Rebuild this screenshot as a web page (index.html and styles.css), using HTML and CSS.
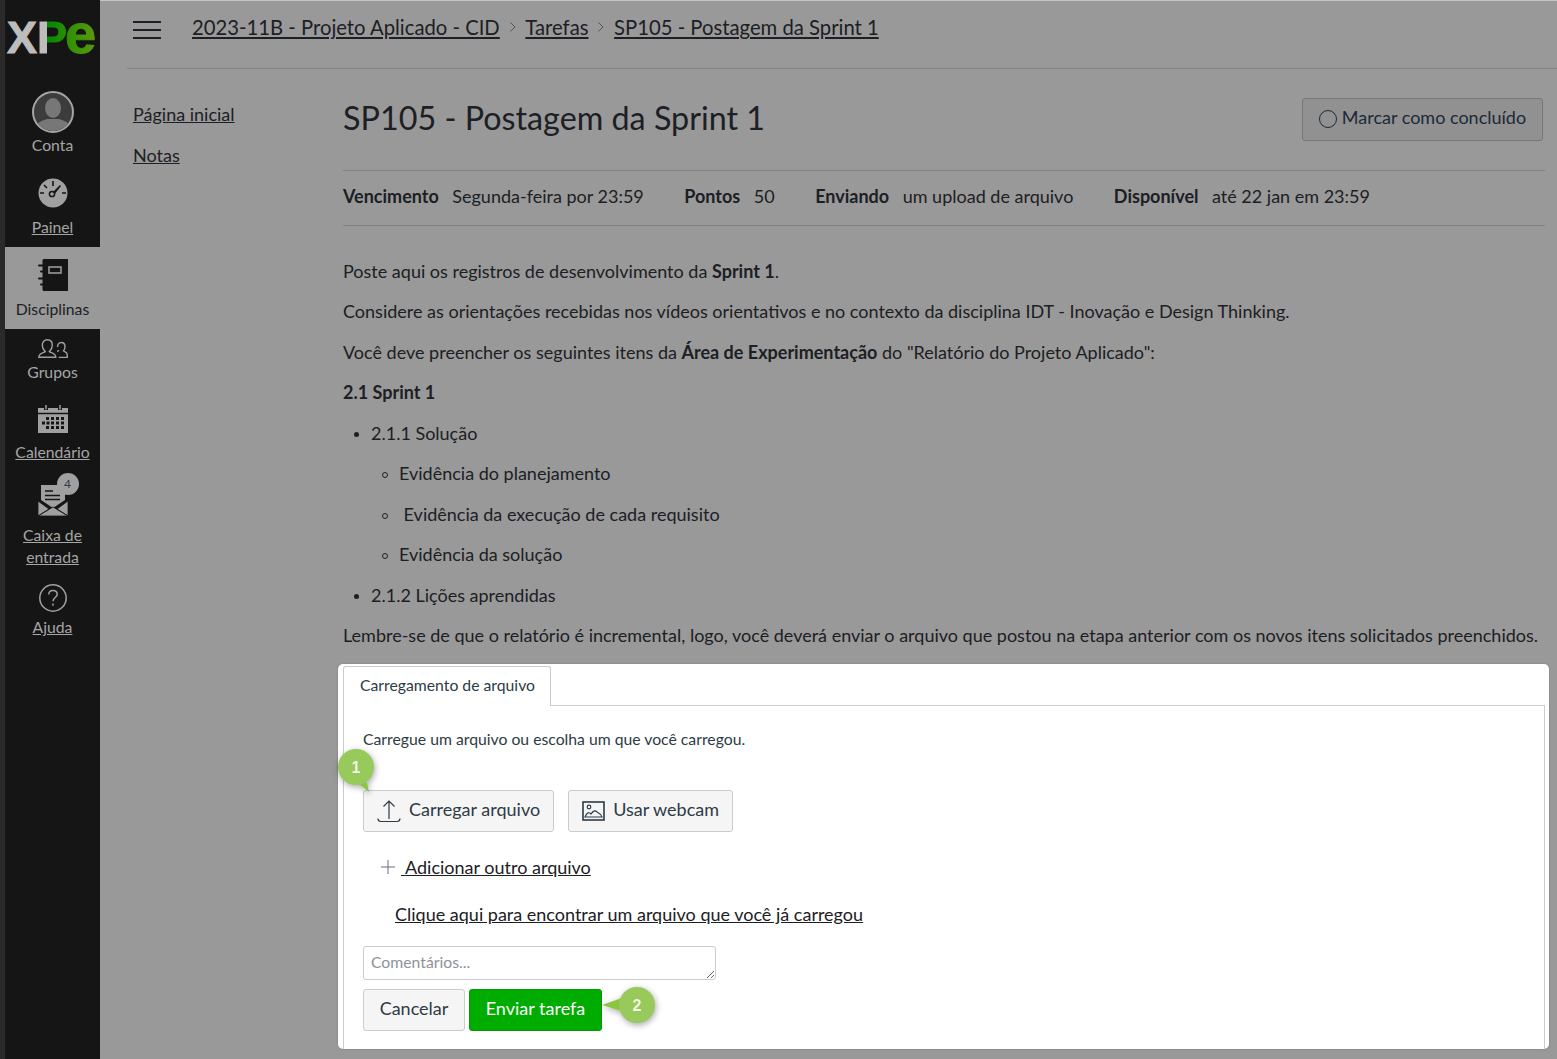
FILE: index.html
```html
<!DOCTYPE html>
<html>
<head>
  <meta charset="utf-8">
  <title>SP105 - Postagem da Sprint 1</title>
  <link rel="stylesheet" href="styles.css">
</head>
<body>
  <div class="app">
    <aside class="sidebar">
      <div class="logo"><span class="logo-x">X</span><span class="logo-p">P</span><span class="logo-e">e</span></div>

      <div class="side-item item-account">
        <svg width="42" height="42" viewBox="0 0 42 42">
          <defs><clipPath id="avatar"><circle cx="21" cy="21" r="19"/></clipPath></defs>
          <circle cx="21" cy="21" r="20" fill="#3c3c3c" stroke="#a5a5a5" stroke-width="2"/>
          <g clip-path="url(#avatar)" fill="#777">
            <ellipse cx="21" cy="17" rx="8" ry="10"/>
            <path d="M2 42c0-10 7-12 13-14h12c6 2 13 4 13 14z"/>
          </g>
        </svg>
        <span class="side-label">Conta</span>
      </div>

      <a class="side-item item-dash" href="#">
        <svg width="30" height="30" viewBox="0 0 30 30">
          <circle cx="15" cy="15" r="14.5" fill="#a0a0a0"/>
          <path d="M15 3v5M6 7l3 3M2 15h4M24 15h4" stroke="#151515" stroke-width="1.6"/>
          <path d="M14 15l8-8 1 1-7 9z" fill="#151515"/>
          <circle cx="14" cy="16" r="2.6" fill="#a0a0a0" stroke="#151515" stroke-width="1.5"/>
        </svg>
        <span class="side-label">Painel</span>
      </a>

      <div class="side-item item-courses active">
        <svg width="30" height="32" viewBox="0 0 30 32">
          <path d="M4.500 1.500C4.500 .7 5.200 0 6 0H30v32H6C5.200 32 4.500 31.300 4.500 30.500z" fill="#151515"/>
          <rect x="11" y="8" width="12" height="6" fill="none" stroke="#999" stroke-width="1.600"/>
          <path d="M1 6.500h5M3 12.500h3M1 19.500h5M3 25.500h3" stroke="#151515" stroke-width="2" stroke-linecap="round"/>
        </svg>
        <span class="side-label">Disciplinas</span>
      </div>

      <div class="side-item item-groups">
        <svg width="30" height="19" viewBox="0 0 30 19" fill="none" stroke="#a0a0a0" stroke-width="1.400">
          <path d="M.8 18.200c0-3.500 4-4 6.500-5.500-2-2-3-3.700-3-6.500 0-3.300 2-5.500 5-5.500s5 2.200 5 5.500c0 2.800-1 4.500-3 6.500 2.500 1.500 6.500 2 6.500 5.500z"/>
          <path d="M19.500 8c0-2.500 1.300-4.500 3.800-4.500s3.700 2 3.700 4.300c0 2-.7 3.200-1.500 4.200 1.500 1 3.700 1.400 3.700 3.400v3h-8.500M19.200 12.500c.6-.3 1.200-.7 1.800-1.300"/>
        </svg>
        <span class="side-label">Grupos</span>
      </div>

      <a class="side-item item-calendar" href="#">
        <svg width="30" height="28" viewBox="0 0 30 28">
          <path d="M0 3h30v25H0z" fill="#a0a0a0"/>
          <path d="M0 8.500h30" stroke="#151515" stroke-width="1.500"/>
          <path d="M8 0v5M22 0v5" stroke="#151515" stroke-width="4"/>
          <path d="M8 0v4.500M22 0v4.500" stroke="#a0a0a0" stroke-width="1.500"/>
          <path d="M8 12h3v3H8zM13 12h3v3h-3zM18 12h3v3h-3zM23 12h3v3h-3zM4 16.500h3v3H4zM8.500 16.500h3v3h-3zM13 16.500h3v3h-3zM18 16.500h3v3h-3zM23 16.500h3v3h-3zM8 21h3v3H8zM13 21h3v3h-3zM18 21h3v3h-3zM23 21h3v3h-3z" fill="#151515"/>
        </svg>
        <span class="side-label">Calendário</span>
      </a>

      <a class="side-item item-inbox" href="#">
        <div class="inbox-icon">
          <svg width="30" height="31" viewBox="0 0 30 31">
            <path d="M3 0h19v5l5 3v7l-12 8L3 15z" fill="#a0a0a0"/>
            <path d="M7 6h8M7 10.500h15M7 14.500h15" stroke="#151515" stroke-width="1.500"/>
            <path d="M0 16l11 8-11 7zM30 16l-11 8 11 7zM0 31l15-9 15 9z" fill="#a0a0a0" stroke="#151515" stroke-width=".8"/>
          </svg>
          <span class="badge">4</span>
        </div>
        <span class="side-label">Caixa de entrada</span>
      </a>

      <a class="side-item item-help" href="#">
        <svg width="28" height="28" viewBox="0 0 28 28" fill="none" stroke="#a0a0a0" stroke-width="1.500">
          <circle cx="14" cy="14" r="13.200"/>
          <path d="M9.800 10.500c0-2.500 1.800-4 4.200-4s4.200 1.500 4.200 3.800c0 3.200-4.200 3.300-4.200 7"/>
          <path d="M14 19.500v2.300"/>
        </svg>
        <span class="side-label">Ajuda</span>
      </a>
    </aside>

    <div class="page">
      <header class="topbar">
        <div class="burger"><span></span><span></span><span></span></div>
        <nav class="crumbs">
          <a href="#">2023-11B - Projeto Aplicado - CID</a>
          <svg width="6" height="10" viewBox="0 0 6 10"><path d="M.5.500L5 5 .5 9.500" fill="none" stroke="#555" stroke-width="1"/></svg>
          <a href="#">Tarefas</a>
          <svg width="6" height="10" viewBox="0 0 6 10"><path d="M.5.500L5 5 .5 9.500" fill="none" stroke="#555" stroke-width="1"/></svg>
          <a href="#">SP105 - Postagem da Sprint 1</a>
        </nav>
      </header>

      <div class="columns">
        <nav class="course-nav">
          <a href="#">Página inicial</a>
          <a href="#">Notas</a>
        </nav>

        <main class="content">
          <div class="title-row">
            <h1>SP105 - Postagem da Sprint 1</h1>
            <button class="mark-btn"><span class="ring"></span>Marcar como concluído</button>
          </div>

          <div class="meta">
            <span><b>Vencimento</b>Segunda-feira por 23:59</span>
            <span><b>Pontos</b>50</span>
            <span><b>Enviando</b>um upload de arquivo</span>
            <span><b>Disponível</b>até 22 jan em 23:59</span>
          </div>

          <div class="description">
            <p>Poste aqui os registros de desenvolvimento da <b>Sprint 1</b>.</p>
            <p>Considere as orientações recebidas nos vídeos orientativos e no contexto da disciplina IDT - Inovação e Design Thinking.</p>
            <p>Você deve preencher os seguintes itens da <b>Área de Experimentação</b> do "Relatório do Projeto Aplicado":</p>
            <p><b>2.1 Sprint 1</b></p>
            <ul>
              <li>2.1.1 Solução
                <ul>
                  <li>Evidência do planejamento</li>
                  <li>&nbsp;Evidência da execução de cada requisito</li>
                  <li>Evidência da solução</li>
                </ul>
              </li>
              <li>2.1.2 Lições aprendidas</li>
            </ul>
            <p>Lembre-se de que o relatório é incremental, logo, você deverá enviar o arquivo que postou na etapa anterior com os novos itens solicitados preenchidos.</p>
          </div>

          <section class="submit-panel">
            <div class="tabs"><div class="tab">Carregamento de arquivo</div></div>
            <div class="tab-body">
              <p class="upload-hint">Carregue um arquivo ou escolha um que você carregou.</p>
              <div class="upload-btns">
                <button class="btn">
                  <svg width="24" height="24" viewBox="0 0 24 24" fill="none" stroke="#2d3b45" stroke-width="1.200">
                    <path d="M12 20V2M6.500 7.500L12 2l5.500 5.500"/>
                    <path d="M1 19.500c0 2 1 3 3 3h16c2 0 3-1 3-3"/>
                  </svg>
                  Carregar arquivo
                </button>
                <button class="btn">
                  <svg width="23" height="20" viewBox="0 0 23 20" fill="none" stroke="#2d3b45" stroke-width="1.200">
                    <rect x="1" y="1" width="21" height="18" stroke-width="1.600"/>
                    <circle cx="7" cy="6" r="1.800"/>
                    <path d="M3 16c2-5 4-5 6-3 2-3 4-4 6-2 2 1 4 2 5 5z"/>
                  </svg>
                  Usar webcam
                </button>
              </div>
              <div class="add-file">
                <svg width="14" height="14" viewBox="0 0 14 14"><path d="M7 0v14M0 7h14" stroke="#6b6f80" stroke-width="1"/></svg>
                <a href="#">&nbsp;Adicionar outro arquivo</a>
              </div>
              <a class="find-file" href="#">Clique aqui para encontrar um arquivo que você já carregou</a>
              <textarea class="comments" placeholder="Comentários..."></textarea>
              <div class="form-actions">
                <button class="btn btn-cancel">Cancelar</button>
                <button class="btn btn-submit">Enviar tarefa</button>
              </div>
            </div>

            <svg class="callout callout-one" width="44" height="52" viewBox="0 0 44 52">
              <path d="M14 30l19 16-2-9z" fill="#8cc63f"/>
              <circle cx="20" cy="21" r="18" fill="#97c95b"/>
              <text x="20" y="27" text-anchor="middle">1</text>
            </svg>
            <svg class="callout callout-two" width="60" height="44" viewBox="0 0 60 44">
              <path d="M1 20l20-7v13z" fill="#8cc63f"/>
              <circle cx="36" cy="20" r="18" fill="#97c95b"/>
              <text x="36" y="26" text-anchor="middle">2</text>
            </svg>
          </section>
        </main>
      </div>
    </div>
  </div>
</body>
</html>
```

FILE: styles.css
```css
html, body {
  margin: 0;
  padding: 0;
  height: 100%;
  overflow: hidden;
}
body {
  font-family: Lato, "Noto Sans", sans-serif;
  font-size: 18px;
  color: #1c2024;
  background-color: #999;
}
a {
  color: inherit;
}
.app {
  display: flex;
  height: 1059px;
  border-top: 1px solid #c4c4c4;
  box-sizing: border-box;
}

/* left global nav */
.sidebar {
  width: 95px;
  flex: none;
  margin-top: -1px;
  background-color: #151515;
  border-left: 5px solid #2a2a2a;
  color: #a6a6a6;
  font-size: 15.75px;
  line-height: 22px;
  text-align: center;
}
.logo {
  height: 82px;
  box-sizing: border-box;
  padding-top: 4px;
  padding-left: 2px;
  text-align: left;
  font-family: "Liberation Sans", sans-serif;
  font-weight: bold;
  font-size: 45px;
  line-height: 60px;
  white-space: nowrap;
  overflow: hidden;
}
.logo-x {
  color: #bdbdbd;
  -webkit-text-stroke: 1px #bdbdbd;
}
.logo-p {
  background: linear-gradient(90deg, #bdbdbd 0, #bdbdbd 10px, #008a00 10px, #2a8f04 100%);
  -webkit-background-clip: text;
  background-clip: text;
  color: transparent;
  -webkit-text-stroke: 1px transparent;
}
.logo-e {
  font-size: 56px;
  margin-left: -2px;
  background: linear-gradient(90deg, #2a8f04 0, #5c9a0c 100%);
  -webkit-background-clip: text;
  background-clip: text;
  color: transparent;
  -webkit-text-stroke: 1px transparent;
}
.side-item {
  display: flex;
  flex-direction: column;
  align-items: center;
  box-sizing: border-box;
}
.side-item svg {
  display: block;
}
.item-account {
  height: 83px;
  padding-top: 9px;
  gap: 1px;
}
.item-dash {
  height: 82px;
  padding-top: 13px;
  gap: 8px;
}
.item-courses {
  height: 82px;
  padding-top: 12px;
  gap: 7px;
}
.item-courses.active {
  background-color: #999;
  color: #1c2024;
}
.item-groups {
  padding-top: 10px;
  gap: 3px;
}
.item-calendar {
  padding-top: 22px;
  gap: 8px;
}
.item-inbox {
  padding: 22px 10px 0;
  gap: 8px;
}
.item-help {
  padding-top: 16px;
  gap: 4px;
}
.inbox-icon {
  position: relative;
}
.badge {
  position: absolute;
  top: -12px;
  right: -11px;
  width: 22px;
  height: 22px;
  border-radius: 50%;
  background-color: #a0a0a0;
  color: #2d3b45;
  font-size: 12px;
  line-height: 22px;
}

/* page */
.page {
  flex: 1;
  min-width: 0;
  padding-left: 27px;
}
.topbar {
  display: flex;
  height: 68px;
  padding-left: 6px;
  padding-top: 13px;
  box-sizing: border-box;
  border-bottom: 1px solid #7e8386;
}
.burger {
  width: 28px;
  height: 18px;
  margin-top: 7px;
  display: flex;
  flex-direction: column;
  gap: 6px;
  margin-right: 31px;
}
.burger span {
  height: 2px;
  background-color: #1c2024;
}
.crumbs {
  display: flex;
  align-items: center;
  align-self: flex-start;
  font-size: 20.25px;
  line-height: 26px;
  gap: 9.8px;
}
.columns {
  display: flex;
}
.course-nav {
  width: 216px;
  flex: none;
  padding-left: 6px;
  padding-top: 34px;
  box-sizing: border-box;
  display: flex;
  flex-direction: column;
  align-items: flex-start;
  gap: 19px;
  line-height: 22px;
}
.content {
  width: 1202px;
  flex: none;
}
.title-row {
  display: flex;
  justify-content: space-between;
  height: 102px;
  box-sizing: border-box;
  padding-top: 28px;
  border-bottom: 1px solid #7e8386;
}
h1 {
  margin: 0;
  font-size: 32.3px;
  font-weight: 400;
  line-height: 42px;
}
.mark-btn {
  width: 241px;
  height: 43px;
  margin-top: 1px;
  margin-right: 2px;
  background-color: #919191;
  border: 1px solid #777;
  border-radius: 3px;
  font: inherit;
  color: #1c2a36;
  display: flex;
  align-items: center;
  justify-content: center;
  padding: 0 0 6px;
}
.ring {
  width: 16px;
  height: 16px;
  border: 1px solid #1c2a36;
  border-radius: 50%;
  margin-right: 5px;
  margin-top: 4px;
}
.meta {
  display: flex;
  gap: 40.5px;
  height: 55px;
  box-sizing: border-box;
  align-items: center;
  padding-bottom: 5px;
  border-bottom: 1px solid #7e8386;
}
.meta b {
  margin-right: 13.500px;
}
.description {
  padding-top: 31.5px;
  line-height: 27px;
}
.description p {
  margin: 0 0 13.5px;
}
.description ul {
  margin: 0;
  padding-left: 28px;
  list-style: none;
}
.description li {
  position: relative;
  margin-bottom: 13.5px;
}
.description li::before {
  content: "";
  position: absolute;
  left: -17px;
  top: 12px;
  width: 5px;
  height: 5px;
  border-radius: 50%;
  background-color: #1c2024;
}
.description li > ul {
  margin-top: 13.5px;
}
.description li li::before {
  left: -17px;
  width: 4px;
  height: 4px;
  background-color: transparent;
  border: 1px solid #1c2024;
}
b {
  font-weight: 700;
}

/* submission panel */
.submit-panel {
  position: relative;
  width: 1211px;
  height: 385px;
  margin-left: -5px;
  margin-top: 15px;
  padding: 2px 4px 0 5px;
  box-sizing: border-box;
  background-color: #fff;
  border-radius: 5px;
  color: #2d3b45;
  box-shadow: 0 0 2px #777;
}
.tabs {
  display: flex;
  height: 40px;
}
.tab {
  width: 208px;
  box-sizing: border-box;
  border: 1px solid #c7cdd1;
  border-bottom: none;
  border-radius: 3px 3px 0 0;
  font-size: 15.75px;
  line-height: 35px;
  padding-left: 16px;
  color: #2d3b45;
}
.tabs::after {
  content: "";
  flex: 1;
  border-bottom: 1px solid #c7cdd1;
}
.tab-body {
  height: 343px;
  box-sizing: border-box;
  border-left: 1px solid #c7cdd1;
  border-right: 1px solid #c7cdd1;
  padding: 22px 0 0 19px;
}
.upload-hint {
  margin: 0;
  font-size: 15.75px;
  line-height: 22px;
}
.upload-btns {
  display: flex;
  gap: 14px;
  margin-top: 40px;
}
.btn {
  height: 42px;
  box-sizing: border-box;
  display: flex;
  align-items: center;
  gap: 8px;
  padding: 0 13px 5px;
  font: inherit;
  color: #2d3b45;
  background-color: #f5f5f5;
  border: 1px solid #c7cdd1;
  border-radius: 3px;
}
.btn svg {
  margin-top: 5px;
}
.add-file {
  display: flex;
  align-items: center;
  gap: 6px;
  margin: 24px 0 0 18px;
  line-height: 22px;
  color: #1c2024;
}
.find-file {
  display: block;
  width: max-content;
  margin: 25px 0 0 32px;
  line-height: 22px;
  color: #1c2024;
}
.comments {
  display: block;
  width: 353px;
  height: 34px;
  box-sizing: border-box;
  margin-top: 21px;
  padding: 4px 7px;
  border: 1px solid #c7cdd1;
  border-radius: 3px;
  font-family: inherit;
  font-size: 15.75px;
  line-height: 22px;
}
.comments::placeholder {
  color: #8b9298;
  opacity: 1;
}
.form-actions {
  display: flex;
  gap: 4px;
  margin-top: 9px;
}
.btn-cancel {
  width: 102px;
  justify-content: center;
  padding: 0 0 5px;
}
.btn-submit {
  width: 133px;
  justify-content: center;
  padding: 0 0 5px;
  background-color: #00ac00;
  border-color: #009a00;
  color: #fff;
}
.callout {
  position: absolute;
  overflow: visible;
  filter: drop-shadow(1px 2px 3px rgba(0, 0, 0, 0.35));
}
.callout text {
  font-family: "Liberation Sans", sans-serif;
  font-size: 16px;
  font-weight: bold;
  fill: #f2f8e8;
}
.callout-one {
  left: -2px;
  top: 82px;
}
.callout-two {
  left: 263px;
  top: 321px;
}
```
